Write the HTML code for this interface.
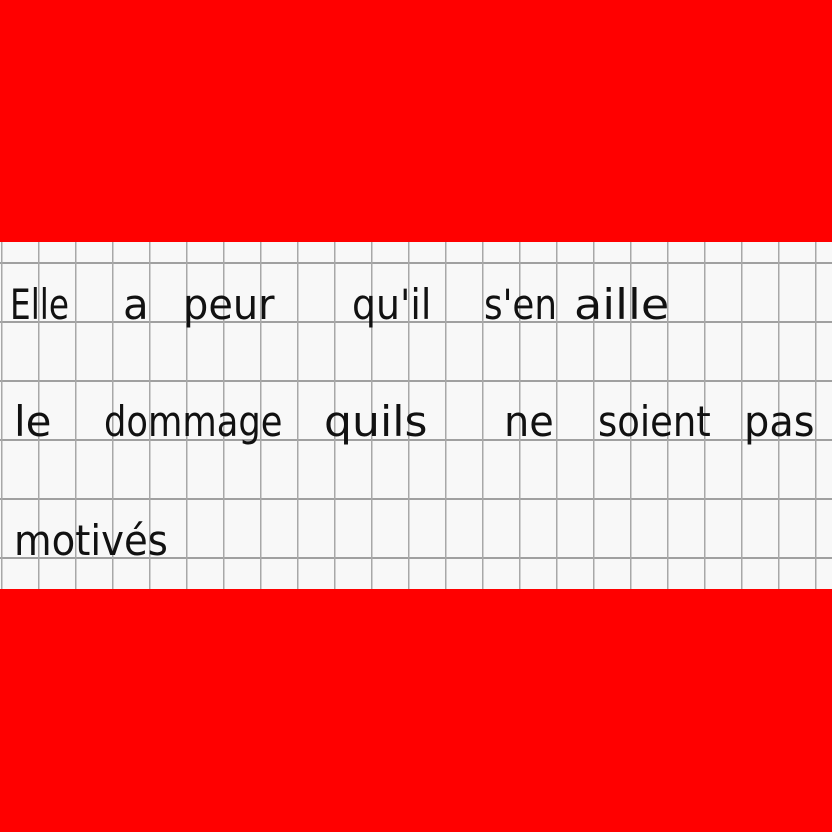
<!DOCTYPE html>
<html><head><style>
html,body{margin:0;padding:0;width:832px;height:832px;overflow:hidden;background:#ff0000}
#paper{position:absolute;left:0;top:242px;width:832px;height:347px;background-color:#f8f8f8;
background-image:linear-gradient(to right,#a8a8a8 0,#a8a8a8 1.5px,transparent 1.5px),linear-gradient(to bottom,#a0a0a0 0,#a0a0a0 2px,transparent 2px);
background-size:37px 59px;background-position:1px 0,0 20px}
.w{position:absolute;font-family:"DejaVu Sans",sans-serif;font-size:42px;color:#111;white-space:nowrap;font-weight:normal;line-height:1;transform-origin:0 100%}
</style></head><body>
<div id="paper">
<div class="w" style="left:10px;top:42px;transform:scaleX(0.78)">Elle</div>
<div class="w" style="left:123px;top:42px">a</div>
<div class="w" style="left:183px;top:42px;transform:scaleX(0.95)">peur</div>
<div class="w" style="left:352px;top:42px;transform:scaleX(0.9)">qu'il</div>
<div class="w" style="left:484px;top:42px;transform:scaleX(0.85)">s'en</div>
<div class="w" style="left:574px;top:42px;transform:scaleX(1.1)">aille</div>
<div class="w" style="left:14px;top:159px">le</div>
<div class="w" style="left:104px;top:159px;transform:scaleX(0.84)">dommage</div>
<div class="w" style="left:324px;top:159px;transform:scaleX(1.05)">quils</div>
<div class="w" style="left:504px;top:159px;transform:scaleX(0.95)">ne</div>
<div class="w" style="left:598px;top:159px;transform:scaleX(0.88)">soient</div>
<div class="w" style="left:744px;top:159px;transform:scaleX(0.95)">pas</div>
<div class="w" style="left:14px;top:278px;transform:scaleX(0.92)">motivés</div>
</div>
</body></html>
